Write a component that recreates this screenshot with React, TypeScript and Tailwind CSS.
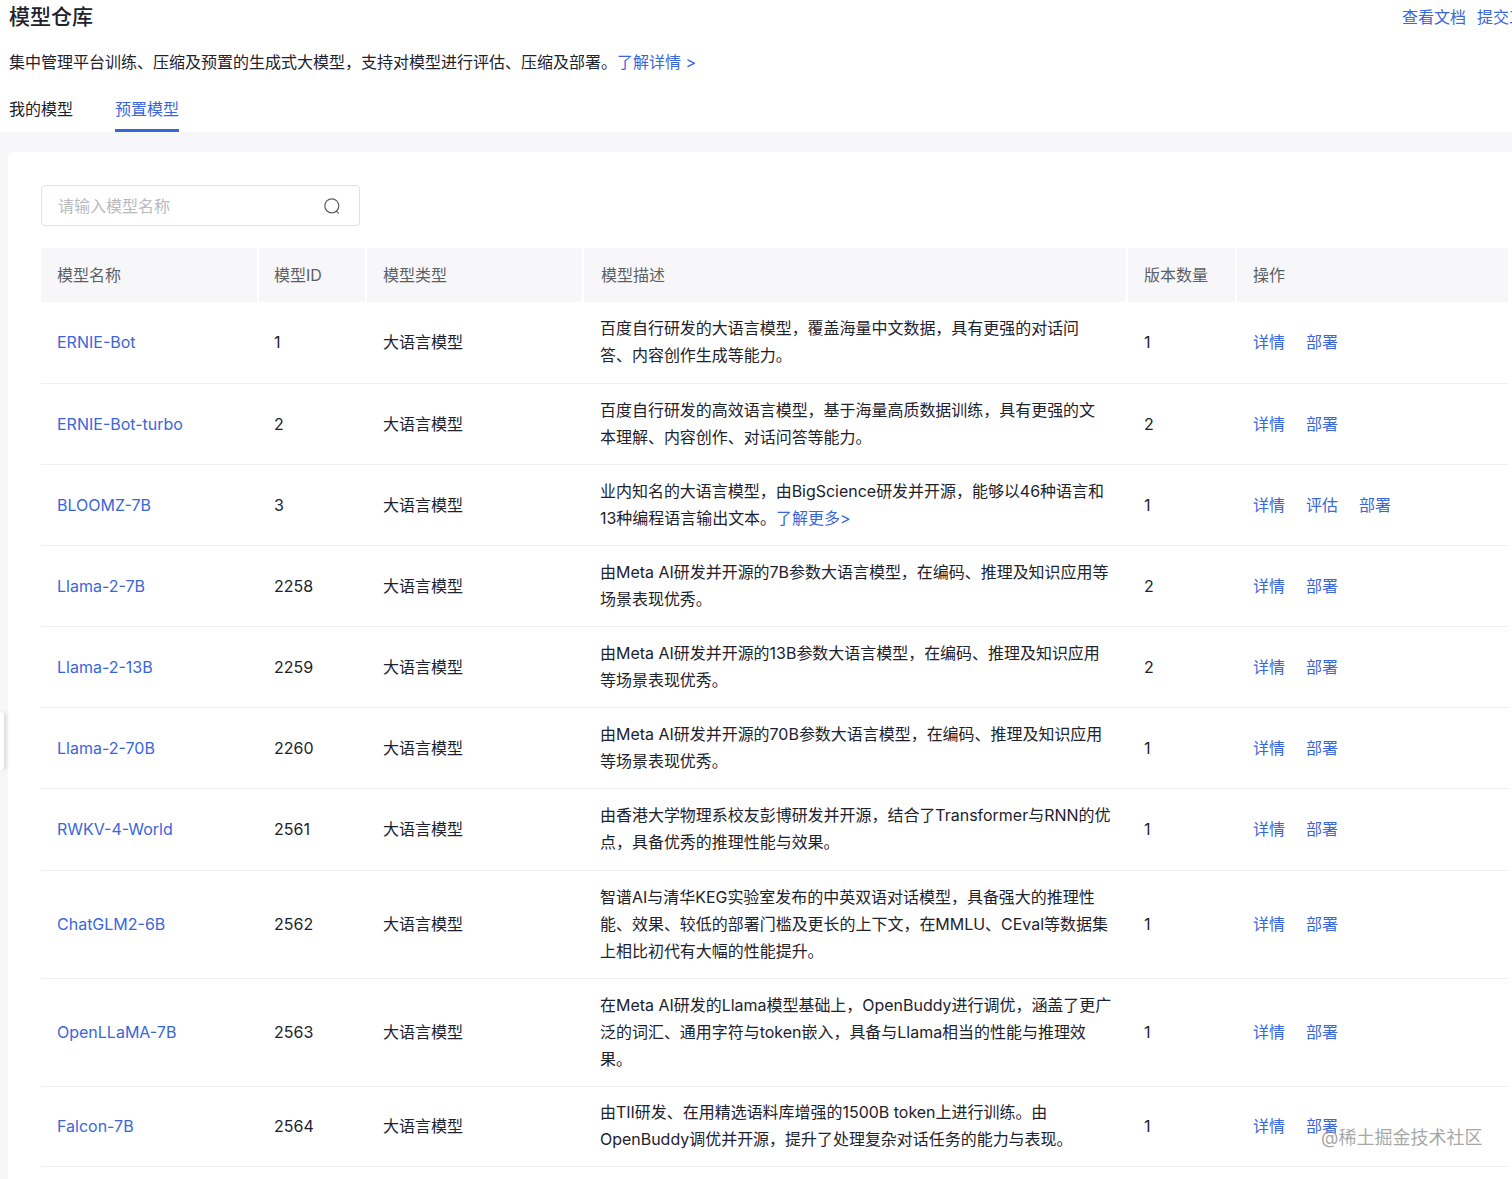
const models = [
  { name: "ERNIE-Bot", id: "1", h: "h-[81px]", desc: ["百度自行研发的大语言模型，覆盖海量中文数据，具有更强的对话问", "答、内容创作生成等能力。"], count: 1 },
  { name: "ERNIE-Bot-turbo", id: "2", h: "h-[81px]", desc: ["百度自行研发的高效语言模型，基于海量高质数据训练，具有更强的文", "本理解、内容创作、对话问答等能力。"], count: 2 },
  { name: "BLOOMZ-7B", id: "3", h: "h-[81px]", desc: ["业内知名的大语言模型，由BigScience研发并开源，能够以46种语言和", "13种编程语言输出文本。"], count: 1, more: true },
  { name: "Llama-2-7B", id: "2258", h: "h-[81px]", desc: ["由Meta AI研发并开源的7B参数大语言模型，在编码、推理及知识应用等", "场景表现优秀。"], count: 2 },
  { name: "Llama-2-13B", id: "2259", h: "h-[81px]", desc: ["由Meta AI研发并开源的13B参数大语言模型，在编码、推理及知识应用", "等场景表现优秀。"], count: 2 },
  { name: "Llama-2-70B", id: "2260", h: "h-[81px]", desc: ["由Meta AI研发并开源的70B参数大语言模型，在编码、推理及知识应用", "等场景表现优秀。"], count: 1 },
  { name: "RWKV-4-World", id: "2561", h: "h-[82px]", desc: ["由香港大学物理系校友彭博研发并开源，结合了Transformer与RNN的优", "点，具备优秀的推理性能与效果。"], count: 1 },
  { name: "ChatGLM2-6B", id: "2562", h: "h-[108px]", desc: ["智谱AI与清华KEG实验室发布的中英双语对话模型，具备强大的推理性", "能、效果、较低的部署门槛及更长的上下文，在MMLU、CEval等数据集", "上相比初代有大幅的性能提升。"], count: 1 },
  { name: "OpenLLaMA-7B", id: "2563", h: "h-[108px]", desc: ["在Meta AI研发的Llama模型基础上，OpenBuddy进行调优，涵盖了更广", "泛的词汇、通用字符与token嵌入，具备与Llama相当的性能与推理效", "果。"], count: 1 },
  { name: "Falcon-7B", id: "2564", h: "h-[80px]", desc: ["由TII研发、在用精选语料库增强的1500B token上进行训练。由", "OpenBuddy调优并开源，提升了处理复杂对话任务的能力与表现。"], count: 1 },
];

const headers = [
  { label: "模型名称", w: "w-[217px]", pad: "pl-[16px]" },
  { label: "模型ID", w: "w-[108px]", pad: "pl-[15px]" },
  { label: "模型类型", w: "w-[217px]", pad: "pl-[16px]" },
  { label: "模型描述", w: "w-[544px]", pad: "pl-[17px]" },
  { label: "版本数量", w: "w-[109px]", pad: "pl-[16px]" },
  { label: "操作", w: "w-[272px]", pad: "pl-[16px]" },
];

export default function App() {
  return (
    <div className="relative h-[1179px] w-[1512px] overflow-hidden bg-[#f7f7f9] font-['Inter','Noto_Sans_CJK_SC',sans-serif] text-[16px] text-[#1d222c]">
      <div className="h-[132px] bg-white pl-[9px]">
        <div className="flex h-[33px] items-center justify-between">
          <h1 className="text-[21px] font-medium">模型仓库</h1>
          <div className="mr-[-29px] flex gap-[11px] text-[#3a66dc]">
            <a>查看文档</a>
            <a>提交工单</a>
          </div>
        </div>
        <p className="mt-[16px] h-[26px] leading-[26px]">
          集中管理平台训练、压缩及预置的生成式大模型，支持对模型进行评估、压缩及部署。
          <a className="text-[#3a66dc]">了解详情 &gt;</a>
        </p>
        <div className="mt-[11px] flex gap-[42px]">
          <div className="h-[46px] pt-[10px] leading-[26px]">我的模型</div>
          <div className="h-[46px] border-b-[3px] border-[#3a66dc] pt-[10px] leading-[26px] text-[#3a66dc]">预置模型</div>
        </div>
      </div>

      <div className="ml-[8px] mt-[20px] h-[1100px] rounded-tl-md bg-white pl-[33px] pt-[33px]">
        <div className="flex h-[41px] w-[319px] items-center justify-between rounded-[4px] border border-[#dfe1e6] pl-[16px] pr-[18px] text-[#b8babf]">
          <span>请输入模型名称</span>
          <svg width="18" height="18" viewBox="0 0 18 18" fill="none" stroke="#5c5f66" strokeWidth="1.2">
            <circle cx="8.8" cy="8.8" r="7" />
            <path d="M13.4 14.2l2 2" strokeLinecap="round" />
          </svg>
        </div>

        <table className="mt-[22px] w-[1467px] table-fixed border-collapse">
          <thead>
            <tr>
              {headers.map((h) => (
                <th
                  key={h.label}
                  className={`${h.w} ${h.pad} h-[54px] border-r-2 border-white bg-[#f7f7f9] text-left font-normal text-[#5c5f66] last:border-r-0`}
                >
                  {h.label}
                </th>
              ))}
            </tr>
          </thead>
          <tbody>
            {models.map((m) => (
              <tr key={m.name} className={`${m.h} border-b border-[#eeeff2]`}>
                <td className="pl-[16px] text-[#3a66dc]">{m.name}</td>
                <td className="pl-[16px]">{m.id}</td>
                <td className="pl-[17px]">大语言模型</td>
                <td className="pl-[17px] text-[15.97px] leading-[27px] whitespace-nowrap">
                  {m.desc.map((line, i) => (
                    <div key={i}>
                      {line}
                      {m.more && i === 1 && <a className="text-[#3a66dc]">了解更多&gt;</a>}
                    </div>
                  ))}
                </td>
                <td className="pl-[17px]">{m.count}</td>
                <td className="pl-[17px] text-[#3a66dc]">
                  <div className="flex gap-[21px]">
                    <a>详情</a>
                    {m.more && <a>评估</a>}
                    <a>部署</a>
                  </div>
                </td>
              </tr>
            ))}
          </tbody>
        </table>
      </div>

      <div className="absolute left-0 top-[712px] h-[58px] w-[4px] rounded-r-sm bg-white shadow-[2px_0_4px_rgba(0,0,0,0.14)]" />
      <div className="absolute left-[1321px] top-[1126px] text-[18px] leading-[24px] text-[#8f8f8f]/80">@稀土掘金技术社区</div>
    </div>
  );
}
